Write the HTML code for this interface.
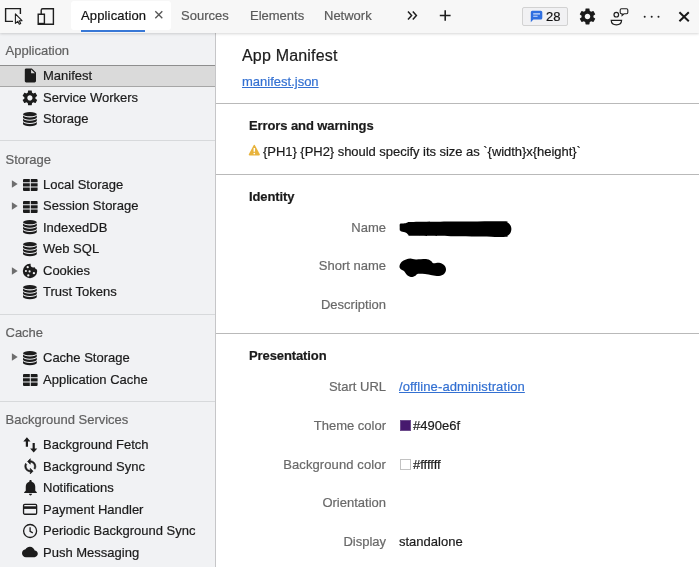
<!DOCTYPE html>
<html><head><meta charset="utf-8">
<style>
*{box-sizing:border-box;margin:0;padding:0}
html,body{-webkit-text-stroke:0.2px;width:699px;height:567px;overflow:hidden;background:#fff;font-family:"Liberation Sans",Arial,sans-serif;font-size:13px;color:#1b1b1b}
#top{will-change:transform;position:absolute;left:0;top:0;width:699px;height:33px;background:#f7f7f7;box-shadow:0 0.5px 2.5px rgba(0,0,0,0.16);z-index:2}
#top .tab{position:absolute;top:0;height:32px;line-height:31px;font-size:13px;color:#5a5a5a}
#top .sel{left:71px;top:1px;width:100px;height:29px;background:#fff;border-radius:3px;color:#111}
#top .sel span.t{position:absolute;left:10px;top:0;line-height:29px;letter-spacing:0.15px}
#top .ul{position:absolute;left:81px;top:30px;width:64px;height:2px;background:#3878d6}
#side{will-change:transform;position:absolute;left:0;top:34px;width:216px;height:533px;background:#f1f2f4;border-right:1px solid #c6c6c8}
#sidebg{position:absolute;left:0;top:30px;width:216px;height:6px;background:#f1f2f4;border-right:1px solid #c6c6c8}
.hd{position:absolute;left:5.5px;color:#616161;font-size:13px;line-height:16px}
.it{position:absolute;left:43px;color:#1b1b1b;font-size:13px;line-height:16px;white-space:nowrap}
.sep{position:absolute;left:0;width:215px;height:1px;background:#d7d9db}
.ic{position:absolute}
.arrow{position:absolute;left:11px;width:0;height:0;border-left:6px solid #6e6e6e;border-top:4px solid transparent;border-bottom:4px solid transparent}
#main{will-change:transform;position:absolute;left:216px;top:34px;width:483px;height:533px;background:#fff}
.line{position:absolute;left:0;width:483px;height:1px;background:#b9b9b9}
.lab{position:absolute;right:313px;color:#696969;font-size:13px;line-height:16px;white-space:nowrap}
.val{position:absolute;left:183px;color:#1b1b1b;font-size:13px;line-height:16px;white-space:nowrap}
.sec{position:absolute;left:33px;letter-spacing:-0.1px;font-weight:bold;font-size:13px;line-height:16px;color:#1b1b1b}
a{color:#3370d2;text-decoration:underline;letter-spacing:0.11px}
</style></head><body>
<div id="top">
  <div class="tab sel"><span class="t">Application</span></div>
  <div class="ul"></div>
  <div class="tab" style="left:181px">Sources</div>
  <div class="tab" style="left:250px">Elements</div>
  <div class="tab" style="left:324px">Network</div>
  <svg class="ic" style="left:0;top:0" width="70" height="33" viewBox="0 0 70 33" fill="none" stroke="#1f1f1f" stroke-width="1.4">
    <path d="M13 21.4H5.6V8.6H20.4V14"/>
    <path d="M15.4 13.8V23.4L17.7 21.3L19.3 24.3L20.7 23.6L19.2 20.7H22Z" stroke-width="1.1" stroke-linejoin="round"/>
    <path d="M41.2 14V10.2Q41.2 8.7 42.7 8.7H53.4V24.2H44.6"/>
    <path d="M38.2 14.2H44.4V24.3H38.2Z"/>
    <path d="M38.2 23.7H44.4" stroke-width="1.8"/>
  </svg>
  <svg class="ic" style="left:153px;top:9px" width="12" height="12" viewBox="0 0 12 12" stroke="#555" stroke-width="1.3"><path d="M2.3 2.3L9.3 9.3M9.3 2.3L2.3 9.3"/></svg>
  <svg class="ic" style="left:400px;top:5px" width="60" height="22" viewBox="0 0 60 22" fill="none" stroke="#1f1f1f" stroke-width="1.5">
    <path d="M8 6.4L11.6 10.5L8 14.6M12.8 6.4L16.4 10.5L12.8 14.6"/>
    <path d="M39.8 10.5H50.6M45.2 5.2V15.8" stroke-width="1.6"/>
  </svg>
  <div style="position:absolute;left:522px;top:7px;width:46px;height:19px;border:1px solid #d2d2d2;border-radius:2px;background:#f1f1f3"></div>
  <svg class="ic" style="left:530px;top:10px" width="13" height="13" viewBox="0 0 13 13"><path d="M2.2 0.8H10.8Q12.3 0.8 12.3 2.3V8Q12.3 9.5 10.8 9.5H3.4L0.8 12.2V2.3Q0.8 0.8 2.2 0.8Z" fill="#2f6fe0"/><path d="M3.2 3.9H10M3.2 6.3H7.6" stroke="#cfe0fb" stroke-width="1.1"/></svg>
  <div style="position:absolute;left:546px;top:8px;font-size:13px;line-height:17px;color:#111">28</div>
  <svg class="ic" style="left:577.700px;top:6.900px" width="19" height="19" viewBox="0 0 24 24"><path fill="#1a1a1a" d="M19.43 12.98c.04-.32.07-.64.07-.98s-.03-.66-.07-.98l2.11-1.65c.19-.15.24-.42.12-.64l-2-3.46c-.12-.22-.39-.3-.61-.22l-2.49 1c-.52-.4-1.08-.73-1.69-.98l-.38-2.65C14.46 2.18 14.25 2 14 2h-4c-.25 0-.46.18-.49.42l-.38 2.65c-.61.25-1.17.59-1.69.98l-2.49-1c-.23-.09-.49 0-.61.22l-2 3.46c-.13.22-.07.49.12.64l2.11 1.650c-.04.32-.07.65-.07.98s.03.66.07.98l-2.11 1.650c-.19.15-.24.42-.12.64l2 3.46c.12.22.39.3.61.22l2.490-1c.52.4 1.080.73 1.690.98l.38 2.650c.03.240.24.420.49.420h4c.25 0 .46-.18.490-.42l.38-2.650c.61-.25 1.170-.59 1.690-.98l2.490 1c.23.09.49 0 .61-.22l2-3.460c.12-.22.070-.49-.12-.64l-2.110-1.650zM12 15.500c-1.930 0-3.500-1.570-3.500-3.500s1.570-3.500 3.500-3.500 3.500 1.570 3.500 3.500-1.570 3.500-3.500 3.500z"/></svg>
  <svg class="ic" style="left:608px;top:6px" width="24" height="22" viewBox="0 0 24 22" fill="none" stroke="#1f1f1f" stroke-width="1.2">
    <circle cx="8.3" cy="8.7" r="2.3"/>
    <path d="M3.2 14.3H13.6Q13.4 18.9 8.4 18.9Q3.4 18.9 3.2 14.3Z"/>
    <path d="M13.4 2.7H18.6Q19.8 2.700 19.8 3.900V6.600Q19.800 7.800 18.600 7.800H16L14.100 9.500V7.800H13.400Q12.200 7.800 12.200 6.600V3.900Q12.200 2.700 13.400 2.700Z" stroke-width="1.100"/>
  </svg>
  <svg class="ic" style="left:640px;top:12px" width="24" height="10" viewBox="0 0 24 10" fill="#1f1f1f"><circle cx="4.700" cy="4.700" r="1"/><circle cx="11.700" cy="4.700" r="1"/><circle cx="18.500" cy="4.700" r="1"/></svg>
  <svg class="ic" style="left:676px;top:9px" width="16" height="16" viewBox="0 0 16 16" stroke="#1a1a1a" stroke-width="2"><path d="M3.400 3.300L12.800 12.300M12.800 3.300L3.400 12.300"/></svg>

</div>
<div id="sidebg"></div>
<div id="side">
  <div class="hd" style="top:9px">Application</div>
  <div style="position:absolute;left:0;top:31px;width:215px;height:22px;background:#dadada;border-top:1px solid #8e8e8e;border-bottom:1px solid #a6a6a6"></div>
  <div class="it" style="top:34px">Manifest</div>
  <div class="it" style="top:56px">Service Workers</div>
  <div class="it" style="top:77px">Storage</div>
  <div class="sep" style="top:106px"></div>
  <div class="hd" style="top:118px">Storage</div>
  <div class="it" style="top:143px">Local Storage</div>
  <div class="it" style="top:164px">Session Storage</div>
  <div class="it" style="top:186px">IndexedDB</div>
  <div class="it" style="top:207px">Web SQL</div>
  <div class="it" style="top:229px">Cookies</div>
  <div class="it" style="top:250px">Trust Tokens</div>
  <div class="sep" style="top:280px"></div>
  <div class="hd" style="top:291px">Cache</div>
  <div class="it" style="top:316px">Cache Storage</div>
  <div class="it" style="top:338px">Application Cache</div>
  <div class="sep" style="top:367px"></div>
  <div class="hd" style="top:378px">Background Services</div>
  <div class="it" style="top:403px">Background Fetch</div>
  <div class="it" style="top:425px">Background Sync</div>
  <div class="it" style="top:446px">Notifications</div>
  <div class="it" style="top:468px">Payment Handler</div>
  <div class="it" style="top:489px">Periodic Background Sync</div>
  <div class="it" style="top:511px">Push Messaging</div>
<!--SIDEICONS-->
  <svg class="ic" style="left:22.0px;top:33.0px" width="16.8" height="16.8" viewBox="0 0 24 24"><path fill="#1c1c1c" d="M6 2c-1.100 0-1.990.9-1.990 2L4 20c0 1.100.890 2 1.990 2H18c1.100 0 2-.9 2-2V8l-6-6H6zm7 7V3.500L18.500 9H13z"/></svg>
  <svg class="ic" style="left:21.2px;top:54.6px" width="17.8" height="17.8" viewBox="0 0 24 24"><path fill="#1c1c1c" d="M19.43 12.98c.04-.32.07-.64.07-.98s-.03-.66-.07-.98l2.11-1.65c.19-.15.24-.42.12-.64l-2-3.46c-.12-.22-.39-.3-.61-.22l-2.49 1c-.52-.4-1.08-.73-1.69-.98l-.38-2.65C14.46 2.18 14.25 2 14 2h-4c-.25 0-.46.18-.49.42l-.38 2.65c-.61.25-1.17.59-1.69.98l-2.49-1c-.23-.09-.49 0-.61.22l-2 3.46c-.13.22-.07.49.12.64l2.11 1.65c-.04.32-.07.65-.07.98s.03.66.07.98l-2.11 1.65c-.19.15-.24.42-.12.64l2 3.46c.12.22.39.3.61.22l2.49-1c.52.4 1.08.73 1.69.98l.38 2.65c.03.24.24.42.49.42h4c.25 0 .46-.18.49-.42l.38-2.65c.61-.25 1.17-.59 1.69-.98l2.49 1c.23.09.49 0 .61-.22l2-3.46c.12-.22.07-.49-.12-.64l-2.11-1.65zM12 15.500c-1.930 0-3.500-1.570-3.500-3.500s1.570-3.500 3.500-3.500 3.500 1.570 3.500 3.500-1.570 3.500-3.500 3.500z"/></svg>
  <svg class="ic" style="left:23.2px;top:78.0px" width="14" height="15" viewBox="0 0 14 15" fill="#1c1c1c"><ellipse cx="6.9" cy="2.15" rx="6.9" ry="2.15"/><path d="M0 3.25A6.9 2.15 0 0 0 13.8 3.25V5.50A6.9 2.15 0 0 1 0 5.50Z"/><path d="M0 6.55A6.9 2.15 0 0 0 13.8 6.55V8.80A6.9 2.15 0 0 1 0 8.80Z"/><path d="M0 9.85A6.9 2.15 0 0 0 13.8 9.85V12.10A6.9 2.15 0 0 1 0 12.10Z"/></svg>
  <svg class="ic" style="left:11px;top:145.4px" width="8" height="10" viewBox="0 0 8 10"><path d="M0.900 1.200L6.700 5L0.900 8.800Z" fill="#6e6e6e"/></svg>
  <svg class="ic" style="left:23.1px;top:145.2px" width="15" height="12" viewBox="0 0 15 12" fill="#1c1c1c"><path d="M1 0H6.8V3.3H0V1Q0 0 1 0ZM7.800 0H13.600Q14.600 0 14.600 1V3.300H7.800ZM0 4.300H6.800V7.600H0ZM7.800 4.300H14.600V7.600H7.800ZM0 8.600H6.800V11.900H1Q0 11.900 0 10.900ZM7.800 8.600H14.600V10.900Q14.600 11.900 13.600 11.900H7.800Z"/></svg>
  <svg class="ic" style="left:11px;top:167.0px" width="8" height="10" viewBox="0 0 8 10"><path d="M0.900 1.200L6.700 5L0.900 8.800Z" fill="#6e6e6e"/></svg>
  <svg class="ic" style="left:23.1px;top:166.8px" width="15" height="12" viewBox="0 0 15 12" fill="#1c1c1c"><path d="M1 0H6.8V3.3H0V1Q0 0 1 0ZM7.800 0H13.600Q14.600 0 14.600 1V3.300H7.800ZM0 4.300H6.800V7.600H0ZM7.800 4.300H14.600V7.600H7.800ZM0 8.600H6.800V11.900H1Q0 11.900 0 10.900ZM7.800 8.600H14.600V10.900Q14.600 11.900 13.600 11.900H7.800Z"/></svg>
  <svg class="ic" style="left:23.3px;top:186.3px" width="14" height="15" viewBox="0 0 14 15" fill="#1c1c1c"><ellipse cx="6.9" cy="2.15" rx="6.9" ry="2.15"/><path d="M0 3.25A6.9 2.15 0 0 0 13.8 3.25V5.50A6.9 2.15 0 0 1 0 5.50Z"/><path d="M0 6.55A6.9 2.15 0 0 0 13.8 6.55V8.80A6.9 2.15 0 0 1 0 8.80Z"/><path d="M0 9.85A6.9 2.15 0 0 0 13.8 9.85V12.10A6.9 2.15 0 0 1 0 12.10Z"/></svg>
  <svg class="ic" style="left:23.3px;top:208.2px" width="14" height="15" viewBox="0 0 14 15" fill="#1c1c1c"><ellipse cx="6.9" cy="2.15" rx="6.9" ry="2.15"/><path d="M0 3.25A6.9 2.15 0 0 0 13.8 3.25V5.50A6.9 2.15 0 0 1 0 5.50Z"/><path d="M0 6.55A6.9 2.15 0 0 0 13.8 6.55V8.80A6.9 2.15 0 0 1 0 8.80Z"/><path d="M0 9.85A6.9 2.15 0 0 0 13.8 9.85V12.10A6.9 2.15 0 0 1 0 12.10Z"/></svg>
  <svg class="ic" style="left:11px;top:231.6px" width="8" height="10" viewBox="0 0 8 10"><path d="M0.900 1.200L6.700 5L0.900 8.800Z" fill="#6e6e6e"/></svg>
  <svg class="ic" style="left:22.1px;top:228.7px" width="16" height="16" viewBox="-8 -8 16 16"><defs><mask id="ckm"><rect x="-8" y="-8" width="16" height="16" fill="#fff"/><circle cx="3.300" cy="-6.200" r="2.700" fill="#000"/><circle cx="7.400" cy="-4.600" r="2.800" fill="#000"/></mask></defs><circle r="7.200" fill="#1c1c1c" mask="url(#ckm)"/><g fill="#f1f1f1"><circle cx="-2.300" cy="-3.800" r="1.150"/><circle cx="-4.100" cy="0" r="1.050"/><circle cx="-0.400" cy="0.400" r="1.050"/><circle cx="3.900" cy="2.200" r="1.150"/><circle cx="-1.700" cy="4.400" r="1.150"/></g></svg>
  <svg class="ic" style="left:23.3px;top:251.3px" width="14" height="15" viewBox="0 0 14 15" fill="#1c1c1c"><ellipse cx="6.9" cy="2.15" rx="6.9" ry="2.15"/><path d="M0 3.25A6.9 2.15 0 0 0 13.8 3.25V5.50A6.9 2.15 0 0 1 0 5.50Z"/><path d="M0 6.55A6.9 2.15 0 0 0 13.8 6.55V8.80A6.9 2.15 0 0 1 0 8.80Z"/><path d="M0 9.85A6.9 2.15 0 0 0 13.8 9.85V12.10A6.9 2.15 0 0 1 0 12.10Z"/></svg>
  <svg class="ic" style="left:11px;top:318.3px" width="8" height="10" viewBox="0 0 8 10"><path d="M0.900 1.200L6.700 5L0.900 8.800Z" fill="#6e6e6e"/></svg>
  <svg class="ic" style="left:23.3px;top:316.7px" width="14" height="15" viewBox="0 0 14 15" fill="#1c1c1c"><ellipse cx="6.9" cy="2.15" rx="6.9" ry="2.15"/><path d="M0 3.25A6.9 2.15 0 0 0 13.8 3.25V5.50A6.9 2.15 0 0 1 0 5.50Z"/><path d="M0 6.55A6.9 2.15 0 0 0 13.8 6.55V8.80A6.9 2.15 0 0 1 0 8.80Z"/><path d="M0 9.85A6.9 2.15 0 0 0 13.8 9.85V12.10A6.9 2.15 0 0 1 0 12.10Z"/></svg>
  <svg class="ic" style="left:23.1px;top:339.9px" width="15" height="12" viewBox="0 0 15 12" fill="#1c1c1c"><path d="M1 0H6.8V3.3H0V1Q0 0 1 0ZM7.800 0H13.600Q14.600 0 14.600 1V3.300H7.800ZM0 4.300H6.800V7.600H0ZM7.800 4.300H14.600V7.600H7.800ZM0 8.600H6.800V11.900H1Q0 11.900 0 10.900ZM7.800 8.600H14.600V10.900Q14.600 11.900 13.600 11.900H7.800Z"/></svg>
  <svg class="ic" style="left:23px;top:403px" width="15" height="16" viewBox="0 0 15 16" fill="#1c1c1c"><path d="M3.900 0.300L7.500 4.500H5V9.800H2.800V4.500H0.300Z"/><path d="M10.700 15.600L7.100 11.400H9.600V6H11.800V11.400H14.300Z"/></svg>
  <svg class="ic" style="left:21.7px;top:423.9px" width="16.6" height="16.6" viewBox="0 0 24 24"><path fill="#1c1c1c" stroke="#1c1c1c" stroke-width="0.9" stroke-linejoin="round" d="M12 4V1L8 5l4 4V6c3.310 0 6 2.690 6 6 0 1.010-.25 1.970-.7 2.800l1.460 1.460C19.540 15.030 20 13.570 20 12c0-4.420-3.580-8-8-8zm0 14c-3.310 0-6-2.690-6-6 0-1.010.25-1.970.7-2.800L5.240 7.740C4.460 8.970 4 10.430 4 12c0 4.420 3.580 8 8 8v3l4-4-4-4v3z"/></svg>
  <svg class="ic" style="left:20.6px;top:444.0px" width="19" height="19" viewBox="0 0 24 24"><path fill="#1c1c1c" d="M12 22c1.100 0 2-.9 2-2h-4c0 1.100.890 2 2 2zm6-6v-5c0-3.070-1.640-5.640-4.500-6.320V4c0-.830-.670-1.500-1.500-1.500s-1.500.670-1.500 1.500v.680C7.630 5.360 6 7.920 6 11v5l-2 2v1h16v-1l-2-2z"/></svg>
  <svg class="ic" style="left:22px;top:469px" width="16" height="13" viewBox="0 0 16 13"><rect x="1.550" y="1.450" width="13.100" height="9.800" rx="1.200" fill="none" stroke="#1c1c1c" stroke-width="1.300"/><rect x="1.500" y="3.300" width="13.200" height="2.600" fill="#1c1c1c"/></svg>
  <svg class="ic" style="left:22px;top:488.6px" width="16" height="16" viewBox="0 0 16 16" fill="none" stroke="#1c1c1c" stroke-width="1.300"><circle cx="8.100" cy="8" r="6.500"/><path d="M8.100 4.200V8.300L10.800 9.900"/></svg>
  <svg class="ic" style="left:22.3px;top:510.4px" width="15.8" height="15.8" viewBox="0 0 24 24"><path fill="#1c1c1c" d="M19.350 10.040C18.670 6.590 15.640 4 12 4 9.110 4 6.600 5.640 5.350 8.040 2.340 8.360 0 10.910 0 14c0 3.310 2.690 6 6 6h13c2.760 0 5-2.240 5-5 0-2.640-2.050-4.780-4.650-4.960z"/></svg>
<!--SIDEICONS-->
</div>
<div id="main">
  <div style="position:absolute;left:26px;top:12px;font-size:16px;line-height:20px;color:#1b1b1b;letter-spacing:0.18px">App Manifest</div>
  <div style="position:absolute;left:26px;top:40px;font-size:13px;line-height:16px"><a style="letter-spacing:0">manifest.json</a></div>
  <div class="line" style="top:69px"></div>
  <div class="sec" style="top:84px">Errors and warnings</div>
  <div style="position:absolute;left:47px;top:110px;font-size:13px;line-height:16px;white-space:nowrap;letter-spacing:-0.04px">{PH1} {PH2} should specify its size as `{width}x{height}`</div>
  <div class="line" style="top:140px"></div>
  <div class="sec" style="top:155px">Identity</div>
  <div class="lab" style="top:186px">Name</div>
  <div class="lab" style="top:224px">Short name</div>
  <div class="lab" style="top:263px">Description</div>
  <div class="line" style="top:299px"></div>
  <div class="sec" style="top:314px">Presentation</div>
  <div class="lab" style="top:345px">Start URL</div>
  <div class="val" style="top:345px"><a>/offline-administration</a></div>
  <div class="lab" style="top:384px">Theme color</div>
  <div class="val" style="top:384px;left:197px">#490e6f</div>
  <div class="lab" style="top:423px;letter-spacing:0.1px">Background color</div>
  <div class="val" style="top:423px;left:197px">#ffffff</div>
  <div class="lab" style="top:461px">Orientation</div>
  <div class="lab" style="top:500px">Display</div>
  <div class="val" style="top:500px">standalone</div>

  <svg class="ic" style="left:30.500px;top:109px" width="14" height="15" viewBox="0 0 14 15"><path d="M6.800 2.100Q7.300 1.300 7.800 2.100L12.800 11.300Q13.200 12.400 12.100 12.400H2.500Q1.400 12.400 1.800 11.300Z" fill="#e8b33c"/><path d="M7.300 5V8.700" stroke="#fff" stroke-width="1.500"/><circle cx="7.300" cy="10.500" r="0.850" fill="#fff"/></svg>
  <svg class="ic" style="left:180px;top:183px" width="120" height="64" viewBox="396 217 120 64"><path d="M399.7 227.3C399.7 226.2 399.5 224.8 399.8 224.2C400.1 223.6 400.6 223.7 401.5 223.5C402.4 223.3 404.4 223.5 405.5 223.3C406.6 223.1 406.9 222.4 408.0 222.2C409.1 222.0 403.3 222.0 412.0 221.9C420.7 221.8 444.8 221.6 460.0 221.5C475.2 221.4 495.1 221.0 503.0 221.2C510.9 221.3 506.3 221.7 507.5 222.4C508.7 223.1 509.8 224.1 510.4 225.2C511.0 226.3 511.4 227.7 511.4 229.0C511.4 230.3 511.0 231.8 510.4 232.9C509.8 234.0 508.6 235.0 507.5 235.7C506.4 236.4 511.4 236.8 503.5 236.9C495.6 237.0 475.1 236.5 460.0 236.3C444.9 236.1 421.5 236.0 413.0 235.8C404.5 235.6 410.2 235.7 409.0 235.2C407.8 234.7 407.2 233.3 406.0 232.7C404.8 232.1 402.5 231.9 401.5 231.6C400.5 231.2 400.2 231.3 399.9 230.6C399.6 229.9 399.7 228.4 399.7 227.3Z" fill="#000"/><path d="M399.5 266.0C399.7 264.8 400.4 263.1 401.5 262.0C402.6 260.9 404.5 260.1 406.0 259.5C407.5 258.9 408.8 258.5 410.5 258.5C412.2 258.5 413.2 259.4 416.0 259.5C418.8 259.6 424.5 258.9 427.0 259.2C429.5 259.4 429.9 260.3 431.0 261.0C432.1 261.7 432.2 263.0 433.5 263.3C434.8 263.6 437.2 262.5 439.0 262.8C440.8 263.1 442.8 263.9 444.0 265.0C445.2 266.1 446.0 268.0 446.0 269.5C446.0 271.0 445.2 272.9 444.0 274.0C442.8 275.1 441.0 275.8 439.0 276.0C437.0 276.2 434.3 275.5 432.0 275.2C429.7 274.9 427.3 274.2 425.0 274.0C422.7 273.8 419.7 273.5 418.0 273.8C416.3 274.1 416.2 275.5 415.0 276.0C413.8 276.5 412.3 277.2 411.0 277.0C409.7 276.8 408.2 276.0 407.0 275.0C405.8 274.0 405.1 272.0 404.0 271.0C402.9 270.0 401.2 269.8 400.5 269.0C399.8 268.2 399.3 267.2 399.5 266.0Z" fill="#000"/></svg>
  <div style="position:absolute;left:184px;top:386px;width:11px;height:11px;background:#46196e;border:1px solid #6d4c8c"></div>
  <div style="position:absolute;left:184px;top:425px;width:11px;height:11px;background:#fff;border:1px solid #c2c2c2"></div>
</div>
</body></html>
